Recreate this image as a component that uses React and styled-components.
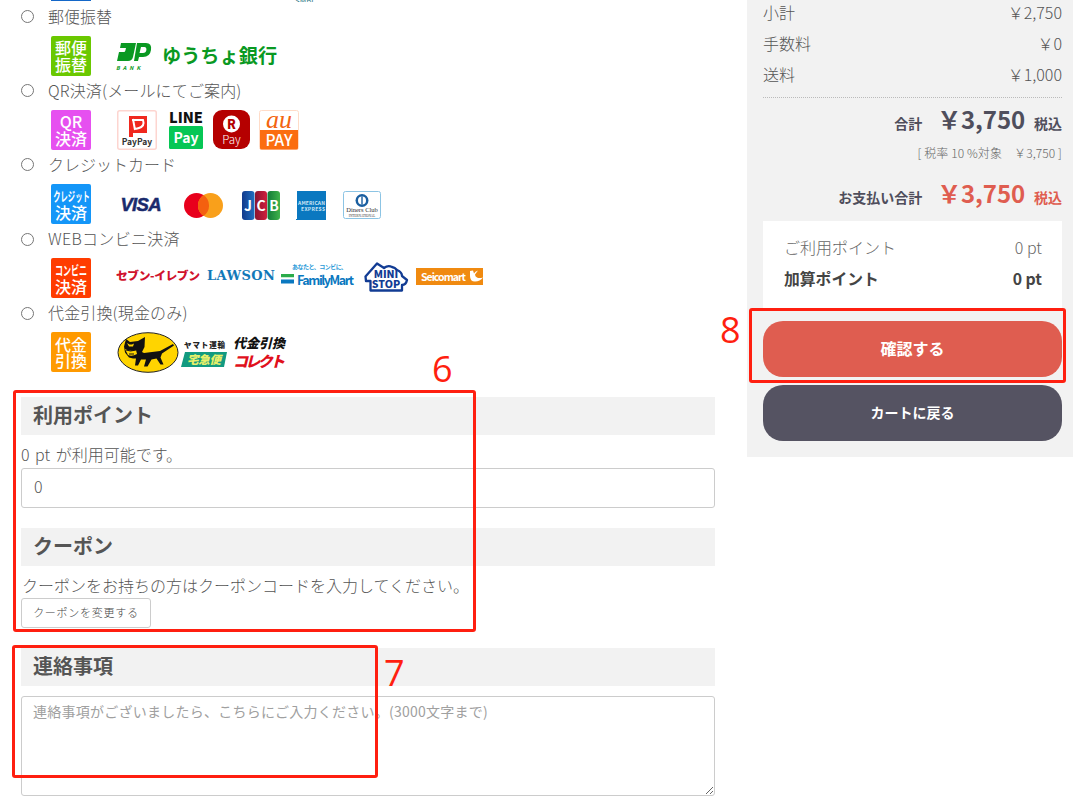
import React from "react";
import styled, { createGlobalStyle } from "styled-components";

const Global = createGlobalStyle`
  html, body { margin: 0; padding: 0; height: 800px; overflow: hidden; background: #fff; }
  body { font-family: "Noto Sans CJK JP", "Noto Sans", sans-serif; font-weight: 300; color: #555; font-size: 16px; }
  * { box-sizing: border-box; }
`;
const JP = `"Noto Sans CJK JP", "Noto Sans", sans-serif`;
const Page = styled.div`
  position: relative; width: 1073px; height: 800px; overflow: hidden;
  display: flex; align-items: flex-start; padding-left: 21px;
`;
const Main = styled.main`width: 694px; flex: none;`;
const Side = styled.aside`
  width: 326px; margin-left: 32px; flex: none; background: #f2f2f2;
  height: 457px; padding: 0 11px 0 16px; display: flex; flex-direction: column;
`;
const Sliver = styled.div`
  height: 2px; overflow: hidden; display: flex; align-items: flex-end; margin: 0 0 1.6px 30px;
`;
const SliverBar = styled.span`display: block; width: 40px; height: 1px; background: #1467c8; align-self: flex-start;`;
const SliverText = styled.span`font-size: 8px; line-height: 2px; color: #3c7f8e; margin-left: 204px; font-weight: 400;`;
const PayRow = styled.div`height: 74.2px;`;
const PayLabel = styled.label`display: flex; align-items: center; height: 24px; margin-bottom: 8px; line-height: 24px;`;
const Radio = styled.span`
  width: 13px; height: 13px; border-radius: 50%; border: 1px solid #767676; background: #fff; flex: none;
  margin: 2px 14px 0 0;
`;
const LabelText = styled.span`letter-spacing: ${p => p.$ls || 0}px;`;
const Logos = styled.div`display: flex; align-items: center; height: 40px; padding-left: 30px;`;
const Badge = styled.div`
  width: 40px; height: 40px; flex: none; border-radius: 2px; background: ${p => p.$bg}; color: #fff;
  display: flex; flex-direction: column; align-items: center; justify-content: center;
  font-size: 16px; line-height: 16.5px; font-weight: 500; white-space: nowrap;
`;
const BadgeSmall = styled.span`
  display: block; width: max-content; font-size: 13px; line-height: 16px; font-weight: 700;
  transform: scaleX(${p => p.$sx});
`;
const Logo = styled.svg`
  flex: none; display: block; margin-left: ${p => p.$ml || 0}px; margin-top: ${p => p.$dy || 0}px;
`;
const GreenWord = styled.span`
  font-size: 19.200px; line-height: 24px; font-weight: 700; color: #0a9922; margin: 0 0 1px ${p => p.$ml}px; white-space: nowrap;
`;
const SectionHead = styled.h2`
  margin: ${p => p.$mt}px 0 0; height: 38px; background: #f2f2f2; padding-left: 12px;
  font-size: 20px; line-height: 36px; font-weight: 700; color: #555;
`;
const Para = styled.p`
  margin: ${p => p.$mt}px 0 0 ${p => p.$ml || 0}px; font-size: 16px; line-height: 24px; height: 24px; white-space: nowrap;
  word-spacing: ${p => p.$ws || 0}px;
`;
const TextInput = styled.input`
  display: block; width: 100%; height: 40px; margin-top: 2px; border: 1px solid #ccc; border-radius: 3px;
  padding: 0 12px 4px; font: 300 16px ${JP}; color: #555; background: #fff; outline: none;
`;
const SmallButton = styled.button`
  display: block; width: 130px; height: 30px; margin-top: 1px; border: 1px solid #ccc; border-radius: 3px;
  background: #fff; font: 300 11px ${JP}; letter-spacing: .75px; color: #444; padding: 0 0 2px;
`;
const Memo = styled.textarea`
  display: block; width: 100%; height: 100px; margin-top: 10px; border: 1px solid #ccc; border-radius: 3px;
  padding: 2px 11px; font: 400 14px/24px ${JP}; letter-spacing: .25px; color: #555; resize: both; outline: none;
  &::placeholder { color: #a0a0a0; opacity: 1; }
`;
const Line = styled.div`
  display: flex; justify-content: space-between; align-items: center; height: 31px; line-height: 31px; margin-top: ${p => p.$mt || 0}px;
`;
const Dotted = styled.div`border-top: 1px dotted #bbb; margin-top: 7px;`;
const TotalRow = styled.div`
  display: flex; justify-content: flex-end; align-items: baseline; color: ${p => p.$c || "#4f4e5c"};
  margin-top: ${p => p.$mt}px; height: 36px; line-height: 36px; white-space: nowrap;
`;
const TotalName = styled.span`font-size: 14px; font-weight: 700; color: #4f4e5c; margin-right: 15px;`;
const TotalPrice = styled.span`font: 700 24px ${JP}; margin-right: 9px; letter-spacing: -.1px;`;
const TaxWord = styled.span`font-size: 14px; font-weight: 700;`;
const TaxNote = styled.div`text-align: right; font-size: 12px; line-height: 18px; letter-spacing: .1px; color: #666; margin-top: 7px;`;
const PointBox = styled.div`background: #fff; margin-top: 10px; height: 87px; padding: 10px 20px 0 21px; flex: none;`;
const PointLine = styled.div`
  display: flex; justify-content: space-between; height: 32px; line-height: 32px;
  font-weight: ${p => p.$b ? 700 : 300}; color: ${p => p.$b ? "#444" : "#666"}; font-size: ${p => p.$b ? 15.8 : 16}px;
`;
const Action = styled.button`
  display: block; width: 299px; height: 56px; border: 0; border-radius: 20px; color: #fff; background: ${p => p.$bg};
  font: 700 ${p => p.$fs}px ${JP}; margin-top: ${p => p.$mt}px; padding: 0 0 2px; flex: none;
`;
const Mark = styled.div`
  position: absolute; border: 3px solid #ff1f10; border-radius: 3px; pointer-events: none;
  left: ${p => p.$x}px; top: ${p => p.$y}px; width: ${p => p.$w}px; height: ${p => p.$h}px;
`;
const MarkNum = styled.span`
  position: absolute; left: ${p => p.$x}px; top: ${p => p.$y}px; font: 400 36px/36px "Open Sans", sans-serif; color: #ff1f10;
`;

const stxt = { fontFamily: "Noto Sans CJK JP, sans-serif" };

const JpBank = () => (
  <Logo $ml={25} width="37" height="30" viewBox="0 0 37 30">
    <path d="M5 2h15l-3 14q-1 4-5 4H1L3 11h5q1 0 1.400-1.500L10 7H4z" fill="#0a9922" />
    <path d="M21 2h9q6 0 5 7-1 7-8 7h-4l-1 4h-4zM25 6l-1.500 6h3.500q3 0 3.400-3 .2-3-2-3z" fill="#0a9922" />
    <text x="0" y="28.500" fontSize="5.500" fontWeight="700" fill="#0a9922" letterSpacing="3" fontStyle="italic" style={stxt}>BANK</text>
  </Logo>
);
const PayPay = () => (
  <Logo $ml={26} width="40" height="40" viewBox="0 0 40 40">
    <rect x=".75" y=".75" width="38.500" height="38.500" rx="2" fill="#fff" stroke="#fdd5d0" strokeWidth="1.500" />
    <path d="M12 6h18v17H16v4h-4z" fill="#f0281e" />
    <path d="M15 10h11q2 6-4 8-3 1-5 1M16 9l2 11" fill="none" stroke="#fff" strokeWidth="2" />
    <text x="20" y="35" textAnchor="middle" fontSize="8.500" fontWeight="700" fill="#333" style={stxt}>PayPay</text>
  </Logo>
);
const LinePay = () => (
  <Logo $ml={12} width="34" height="39" viewBox="0 0 34 39">
    <text x="17" y="12.500" textAnchor="middle" fontSize="14.500" fontWeight="900" fill="#111" style={stxt}>LINE</text>
    <rect y="16" width="34" height="23" rx="1.500" fill="#06c755" />
    <text x="17" y="33" textAnchor="middle" fontSize="14" fontWeight="700" fill="#fff" style={stxt}>Pay</text>
  </Logo>
);
const RPay = () => (
  <Logo $ml={10} width="37" height="39" viewBox="0 0 37 39">
    <rect width="37" height="39" rx="9" fill="#b50000" />
    <circle cx="18.500" cy="14" r="8.500" fill="#fff" />
    <text x="18.500" y="18.500" textAnchor="middle" fontSize="12.500" fontWeight="900" fill="#b50000" style={stxt}>R</text>
    <text x="18.500" y="34" textAnchor="middle" fontSize="11.500" fontWeight="300" fill="#fff" style={stxt}>Pay</text>
  </Logo>
);
const AuPay = () => (
  <Logo $ml={9} width="40" height="40" viewBox="0 0 40 40">
    <rect x=".5" y=".5" width="39" height="39" rx="2" fill="#fff" stroke="#ffdcc8" />
    <path d="M1 20h38v18a1.500 1.500 0 0 1-1.500 1.500h-35A1.500 1.500 0 0 1 1 38z" fill="#fb6d10" />
    <text x="20" y="17.500" textAnchor="middle" fontSize="26" fontStyle="italic" fontFamily="Liberation Serif, serif" fill="#f3640f">au</text>
    <text x="20" y="35.500" textAnchor="middle" fontSize="15.500" fontWeight="500" fill="#fff" style={stxt}>PAY</text>
  </Logo>
);
const Visa = () => (
  <Logo $ml={29} width="43" height="18" viewBox="0 0 43 18">
    <text x="0.500" y="15.500" fontSize="18.500" fontWeight="700" fontStyle="italic" fontFamily="Liberation Sans, sans-serif" fill="#1a2a6c" stroke="#1a2a6c" strokeWidth=".5" textLength="41">VISA</text>
  </Logo>
);
const Master = () => (
  <Logo $ml={21} $dy={4} width="39" height="25" viewBox="0 0 39 25">
    <circle cx="12.500" cy="12.500" r="12.500" fill="#e8001c" />
    <circle cx="26.500" cy="12.500" r="12.500" fill="#f9a01b" />
    <path d="M19.500 2.100a12.500 12.500 0 0 1 0 20.800 12.500 12.500 0 0 1 0-20.800z" fill="#f4600f" />
  </Logo>
);
const Jcb = () => (
  <Logo $ml={19} $dy={4} width="38" height="29" viewBox="0 0 38 29">
    <defs>
      <linearGradient id="jb" x1="0" x2="1"><stop offset="0" stopColor="#123a8c" /><stop offset="1" stopColor="#1f6fc0" /></linearGradient>
      <linearGradient id="jr" x1="0" x2="1"><stop offset="0" stopColor="#8a1530" /><stop offset="1" stopColor="#d01f3c" /></linearGradient>
      <linearGradient id="jg" x1="0" x2="1"><stop offset="0" stopColor="#127a38" /><stop offset="1" stopColor="#3eb24a" /></linearGradient>
    </defs>
    <rect width="12.500" height="29" rx="3" fill="url(#jb)" />
    <rect x="13" width="12" height="29" rx="3" fill="url(#jr)" />
    <rect x="25.500" width="12.500" height="29" rx="3" fill="url(#jg)" />
    <text x="6" y="20" textAnchor="middle" fontSize="14" fontWeight="700" fill="#fff" style={stxt}>J</text>
    <text x="19" y="20" textAnchor="middle" fontSize="14" fontWeight="700" fill="#fff" style={stxt}>C</text>
    <text x="32" y="20" textAnchor="middle" fontSize="14" fontWeight="700" fill="#fff" style={stxt}>B</text>
  </Logo>
);
const Amex = () => (
  <Logo $ml={16} $dy={4} width="30" height="29" viewBox="0 0 30 29">
    <rect x="1" width="29" height="29" fill="#0a78c0" />
    <text x="2" y="14" fontSize="5" fontWeight="700" fill="#cfe6f5" style={stxt} textLength="27">AMERICAN</text>
    <text x="5" y="20" fontSize="5" fontWeight="700" fill="#cfe6f5" style={stxt} textLength="24">EXPRESS</text>
    <rect y="28" width="3" height="1" fill="#0a78c0" />
  </Logo>
);
const Diners = () => (
  <Logo $ml={17} $dy={3} width="38" height="28" viewBox="0 0 38 28">
    <rect x=".5" y=".5" width="37" height="27" rx="2" fill="#fff" stroke="#8cc4e4" />
    <circle cx="19" cy="9.500" r="6.500" fill="#1a5fa0" />
    <circle cx="19" cy="9.500" r="4" fill="#fff" />
    <rect x="18.300" y="5.500" width="1.400" height="8" fill="#1a5fa0" />
    <text x="19" y="21" textAnchor="middle" fontSize="6.500" fontFamily="Liberation Serif, serif" fill="#333">Diners Club</text>
    <text x="19" y="25.500" textAnchor="middle" fontSize="3.300" fontFamily="Liberation Serif, serif" fill="#333">INTERNATIONAL</text>
  </Logo>
);
const Seven = () => (
  <Logo $ml={25} $dy={-6} width="85" height="16" viewBox="0 0 85 16">
    <text x="0" y="13" fontSize="11.800" fontWeight="900" fill="#d0122d" style={stxt} textLength="84">セブン-イレブン</text>
  </Logo>
);
const Lawson = () => (
  <Logo $ml={6} $dy={-6} width="69" height="16" viewBox="0 0 69 16">
    <text x="0" y="13" fontSize="13" fontWeight="700" fontFamily="DejaVu Serif, serif" fill="#1279b8" textLength="68">LAWSON</text>
  </Logo>
);
const Family = () => (
  <Logo $ml={5} $dy={-4} width="74" height="26" viewBox="0 0 74 26">
    <text x="11" y="6" fontSize="6" fontWeight="700" fill="#2a9ad8" style={stxt} textLength="55">あなたと、コンビに、</text>
    <rect y="11" width="13" height="3.500" fill="#2bab4a" />
    <rect y="14.500" width="13" height="2" fill="#fff" />
    <rect y="16.500" width="13" height="4" fill="#0a78c0" />
    <text x="16" y="21.500" fontSize="12.500" fontWeight="700" fill="#0a78c0" style={stxt} textLength="57">FamilyMart</text>
  </Logo>
);
const MiniStop = () => (
  <Logo $ml={9} $dy={-3} width="45" height="30" viewBox="0 0 45 30">
    <path d="M1.500 14.500L13 1.500l7 4.500q4-3 8-1 3 .5 5 3 5 2 5 6l5 4q-1 5-5 5v5.500H6.500V19H2z" fill="#fff" stroke="#123c94" strokeWidth="2.300" strokeLinejoin="round" />
    <text x="22" y="15.500" textAnchor="middle" fontSize="10.500" fontWeight="900" fill="#123c94" style={stxt}>MINI</text>
    <text x="22" y="25.500" textAnchor="middle" fontSize="10.500" fontWeight="900" fill="#123c94" style={stxt}>STOP</text>
  </Logo>
);
const Seico = () => (
  <Logo $ml={7} $dy={-3} width="67" height="17" viewBox="0 0 67 17">
    <rect width="67" height="17" fill="#f08a10" />
    <text x="5" y="12.500" fontSize="10.500" fontWeight="700" fill="#fff" style={stxt} textLength="45">Seicomart</text>
    <path d="M54 3v5q0 5.500 5 5.500 5 0 8-4-4 1-6 0-2-1-2-3l3-4q-3 1-4 3l-1-3z" fill="#fff" />
  </Logo>
);
const Yamato = () => (
  <Logo $ml={26} width="62" height="41" viewBox="0 0 62 41">
    <ellipse cx="31" cy="20.500" rx="30" ry="19.800" fill="#ffd400" stroke="#222" strokeWidth="1" />
    <path d="M9 7l4 3 8-1 7-4-.5 10-2.500 5 2 1 16-2 13-7 1 1.500-12 8-1.500 4 3 7h-3l-4-6-5 1-4 7h-3.500l2-7-5 0-3 6h-3l1-7-3 0-4-1-4-5-1-6z" fill="#111" />
    <path d="M10 11l2.500 1.500 2.500 0 2-1-1 3-4 0zM8 17q5 3 11 1l1 4q-5 3-9 1z" fill="#ffd400" />
    <path d="M9 18q4 2 10 0M12 22h5" stroke="#111" strokeWidth="1" fill="none" />
  </Logo>
);
const YamatoText = () => (
  <Logo $ml={2} $dy={6} width="46" height="32" viewBox="0 0 46 32">
    <text x="3" y="9" fontSize="7.500" fontWeight="900" fill="#222" style={stxt} textLength="41">ヤマト運輸</text>
    <path d="M4 13h42l-3 15H0z" fill="#129a80" />
    <text x="6" y="25" fontSize="11.500" fontWeight="900" fontStyle="italic" fill="#e8f06a" style={stxt} textLength="34">宅急便</text>
  </Logo>
);
const Collect = () => (
  <Logo $ml={5} $dy={2} width="55" height="36" viewBox="0 0 55 36">
    <text x="1" y="13" fontSize="13" fontWeight="900" fontStyle="italic" fill="#111" style={stxt} textLength="52">代金引換</text>
    <text x="1" y="32" fontSize="15" fontWeight="900" fontStyle="italic" fill="#e0101c" style={stxt} textLength="52">コレクト</text>
  </Logo>
);

const Row = ({ label, ls, children }) => (
  <PayRow>
    <PayLabel><Radio /><LabelText $ls={ls}>{label}</LabelText></PayLabel>
    <Logos>{children}</Logos>
  </PayRow>
);

export default function App() {
  return (
    <Page>
      <Global />
      <Main>
        <Sliver><SliverBar /><SliverText>SMBC</SliverText></Sliver>
        <Row label="郵便振替">
          <Badge $bg="#6ac800"><span>郵便</span><span>振替</span></Badge>
          <JpBank /><GreenWord $ml={9}>ゆうちょ銀行</GreenWord>
        </Row>
        <Row label="QR決済(メールにてご案内)" ls={.15}>
          <Badge $bg="#e650f0"><span>QR</span><span>決済</span></Badge>
          <PayPay /><LinePay /><RPay /><AuPay />
        </Row>
        <Row label="クレジットカード">
          <Badge $bg="#1496f8"><BadgeSmall $sx={.56}>クレジット</BadgeSmall><span>決済</span></Badge>
          <Visa /><Master /><Jcb /><Amex /><Diners />
        </Row>
        <Row label="WEBコンビニ決済" ls={.3}>
          <Badge $bg="#ff3c00"><BadgeSmall $sx={.62}>コンビニ</BadgeSmall><span>決済</span></Badge>
          <Seven /><Lawson /><Family /><MiniStop /><Seico />
        </Row>
        <Row label="代金引換(現金のみ)" ls={.15}>
          <Badge $bg="#ff9a00"><span>代金</span><span>引換</span></Badge>
          <Yamato /><YamatoText /><Collect />
        </Row>

        <SectionHead $mt={22.4}>利用ポイント</SectionHead>
        <Para $mt={7} $ws={2}>0 pt が利用可能です。</Para>
        <TextInput defaultValue="0" />
        <SectionHead $mt={20}>クーポン</SectionHead>
        <Para $mt={7} $ml={1}>クーポンをお持ちの方はクーポンコードを入力してください。</Para>
        <SmallButton>クーポンを変更する</SmallButton>
        <SectionHead $mt={20}>連絡事項</SectionHead>
        <Memo placeholder="連絡事項がございましたら、こちらにご入力ください。(3000文字まで)" />
      </Main>
      <Side>
        <Line $mt={-3}><span>小計</span><span>￥2,750</span></Line>
        <Line><span>手数料</span><span>￥0</span></Line>
        <Line><span>送料</span><span>￥1,000</span></Line>
        <Dotted />
        <TotalRow $mt={3}><TotalName>合計</TotalName><TotalPrice>￥3,750</TotalPrice><TaxWord>税込</TaxWord></TotalRow>
        <TaxNote>[ 税率 10 %対象　￥3,750 ]</TaxNote>
        <TotalRow $mt={13} $c="#df5d50"><TotalName>お支払い合計</TotalName><TotalPrice>￥3,750</TotalPrice><TaxWord>税込</TaxWord></TotalRow>
        <PointBox>
          <PointLine><span>ご利用ポイント</span><span>0 pt</span></PointLine>
          <PointLine $b><span>加算ポイント</span><span>0 pt</span></PointLine>
        </PointBox>
        <Action $bg="#df5d50" $fs={16} $mt={13}>確認する</Action>
        <Action $bg="#555362" $fs={14} $mt={8}>カートに戻る</Action>
      </Side>
      <Mark $x={13} $y={390} $w={463} $h={242} />
      <MarkNum $x={432} $y={351}>6</MarkNum>
      <Mark $x={12} $y={645} $w={366} $h={133} />
      <MarkNum $x={384} $y={655}>7</MarkNum>
      <Mark $x={749} $y={308} $w={317} $h={75} />
      <MarkNum $x={720} $y={312}>8</MarkNum>
    </Page>
  );
}
